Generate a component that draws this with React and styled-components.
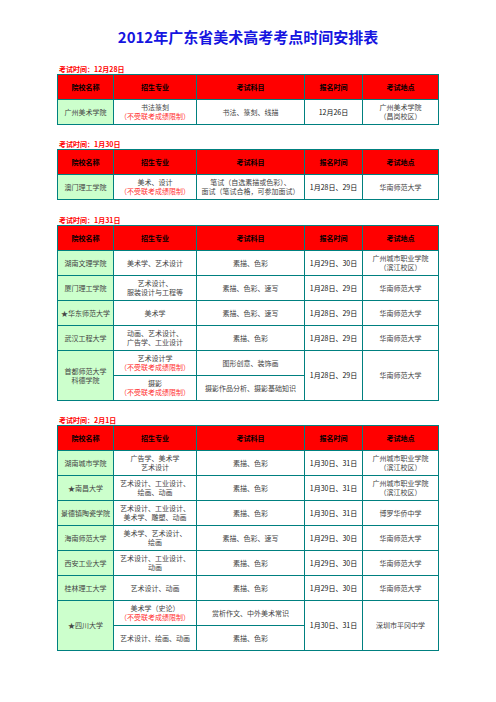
import React from 'react';
import styled, { createGlobalStyle } from 'styled-components';

const GlobalStyle = createGlobalStyle`
  body {
    margin: 0;
    background: #ffffff;
    font-family: "Noto Sans CJK SC", "Liberation Sans", sans-serif;
  }
`;

const Page = styled.div`
  width: 496px;
  padding-top: 28px;
  padding-left: 57px;
  box-sizing: border-box;
`;

const Title = styled.h1`
  margin: 0 0 0 -57px;
  width: 496px;
  text-align: center;
  font-size: 15px;
  line-height: 18px;
  font-weight: bold;
  color: #1515e0;
`;

const Section = styled.section`
  margin-top: ${(p) => p.$gap}px;
`;

const DateLabel = styled.div`
  font-size: 7px;
  line-height: 10px;
  font-weight: bold;
  color: #ff0000;
  padding-left: 2px;
`;

const Table = styled.table`
  border-collapse: collapse;
  table-layout: fixed;
  width: 381px;
  font-size: 7px;
  line-height: 9px;
  color: #444444;
`;

const Cell = styled.td`
  border: 1px solid #008080;
  height: 24px;
  padding: 0 2px;
  text-align: center;
  vertical-align: middle;
  white-space: nowrap;
`;

const HeadCell = styled(Cell).attrs({ as: 'th' })`
  background: #ff0000;
  color: #000000;
  font-weight: bold;
`;

const SchoolCell = styled(Cell)`
  background: #ccffcc;
`;

const DateCell = styled(Cell)`
  color: #111111;
`;

const Note = styled.div`
  color: #ff3030;
`;

const widths = [56, 83, 108, 58, 76];
const headers = ['院校名称', '招生专业', '考试科目', '报名时间', '考试地点'];

const NOTE = '（不受联考成绩限制）';

const sections = [
  {
    date: '12月28日',
    gap: 18,
    rows: [
      { school: ['广州美术学院'], major: ['书法篆刻'], note: true, subject: ['书法、篆刻、线描'], signup: '12月26日', place: ['广州美术学院', '（昌岗校区）'] },
    ],
  },
  {
    date: '1月30日',
    gap: 14,
    rows: [
      { school: ['澳门理工学院'], major: ['美术、设计'], note: true, subject: ['笔试（自选素描或色彩）、', '面试（笔试合格，可参加面试）'], signup: '1月28日、29日', place: ['华南师范大学'] },
    ],
  },
  {
    date: '1月31日',
    gap: 15,
    rows: [
      { school: ['湖南文理学院'], major: ['美术学、艺术设计'], subject: ['素描、色彩'], signup: '1月29日、30日', place: ['广州城市职业学院', '（滨江校区）'] },
      { school: ['厦门理工学院'], major: ['艺术设计、', '服装设计与工程等'], subject: ['素描、色彩、速写'], signup: '1月28日、29日', place: ['华南师范大学'] },
      { school: ['★华东师范大学'], major: ['美术学'], subject: ['素描、色彩、速写'], signup: '1月28日、29日', place: ['华南师范大学'] },
      { school: ['武汉工程大学'], major: ['动画、艺术设计、', '广告学、工业设计'], subject: ['素描、色彩'], signup: '1月28日、29日', place: ['华南师范大学'] },
      { school: ['首都师范大学', '科德学院'], span: 2, major: ['艺术设计学'], note: true, subject: ['图形创意、装饰画'], signup: '1月28日、29日', place: ['华南师范大学'] },
      { sub: true, major: ['摄影'], note: true, subject: ['摄影作品分析、摄影基础知识'] },
    ],
  },
  {
    date: '2月1日',
    gap: 14,
    rows: [
      { school: ['湖南城市学院'], major: ['广告学、美术学', '艺术设计'], subject: ['素描、色彩'], signup: '1月30日、31日', place: ['广州城市职业学院', '（滨江校区）'] },
      { school: ['★南昌大学'], major: ['艺术设计、工业设计、', '绘画、动画'], subject: ['素描、色彩'], signup: '1月30日、31日', place: ['广州城市职业学院', '（滨江校区）'] },
      { school: ['景德镇陶瓷学院'], major: ['艺术设计、工业设计、', '美术学、雕塑、动画'], subject: ['素描、色彩'], signup: '1月30日、31日', place: ['博罗华侨中学'] },
      { school: ['海南师范大学'], major: ['美术学、艺术设计、', '绘画'], subject: ['素描、色彩、速写'], signup: '1月29日、30日', place: ['华南师范大学'] },
      { school: ['西安工业大学'], major: ['艺术设计、工业设计、', '动画'], subject: ['素描、色彩'], signup: '1月29日、30日', place: ['华南师范大学'] },
      { school: ['桂林理工大学'], major: ['艺术设计、动画'], subject: ['素描、色彩'], signup: '1月29日、30日', place: ['华南师范大学'] },
      { school: ['★四川大学'], span: 2, major: ['美术学（史论）'], note: true, subject: ['赏析作文、中外美术常识'], signup: '1月30日、31日', place: ['深圳市平冈中学'] },
      { sub: true, major: ['艺术设计、绘画、动画'], subject: ['素描、色彩'] },
    ],
  },
];

const Lines = ({ items }) => items.map((t, i) => <div key={i}>{t}</div>);

const ScheduleTable = ({ rows }) => (
  <Table>
    <colgroup>
      {widths.map((w, i) => (
        <col key={i} style={{ width: w }} />
      ))}
    </colgroup>
    <tbody>
      <tr>
        {headers.map((h) => (
          <HeadCell key={h}>{h}</HeadCell>
        ))}
      </tr>
      {rows.map((r, i) => (
        <tr key={i}>
          {!r.sub && (
            <SchoolCell rowSpan={r.span || 1}>
              <Lines items={r.school} />
            </SchoolCell>
          )}
          <Cell>
            <Lines items={r.major} />
            {r.note && <Note>{NOTE}</Note>}
          </Cell>
          <Cell>
            <Lines items={r.subject} />
          </Cell>
          {!r.sub && <DateCell rowSpan={r.span || 1}>{r.signup}</DateCell>}
          {!r.sub && (
            <Cell rowSpan={r.span || 1}>
              <Lines items={r.place} />
            </Cell>
          )}
        </tr>
      ))}
    </tbody>
  </Table>
);

export default function App() {
  return (
    <>
      <GlobalStyle />
      <Page>
        <Title>2012年广东省美术高考考点时间安排表</Title>
        {sections.map((s) => (
          <Section key={s.date} $gap={s.gap}>
            <DateLabel>考试时间：{s.date}</DateLabel>
            <ScheduleTable rows={s.rows} />
          </Section>
        ))}
      </Page>
    </>
  );
}
